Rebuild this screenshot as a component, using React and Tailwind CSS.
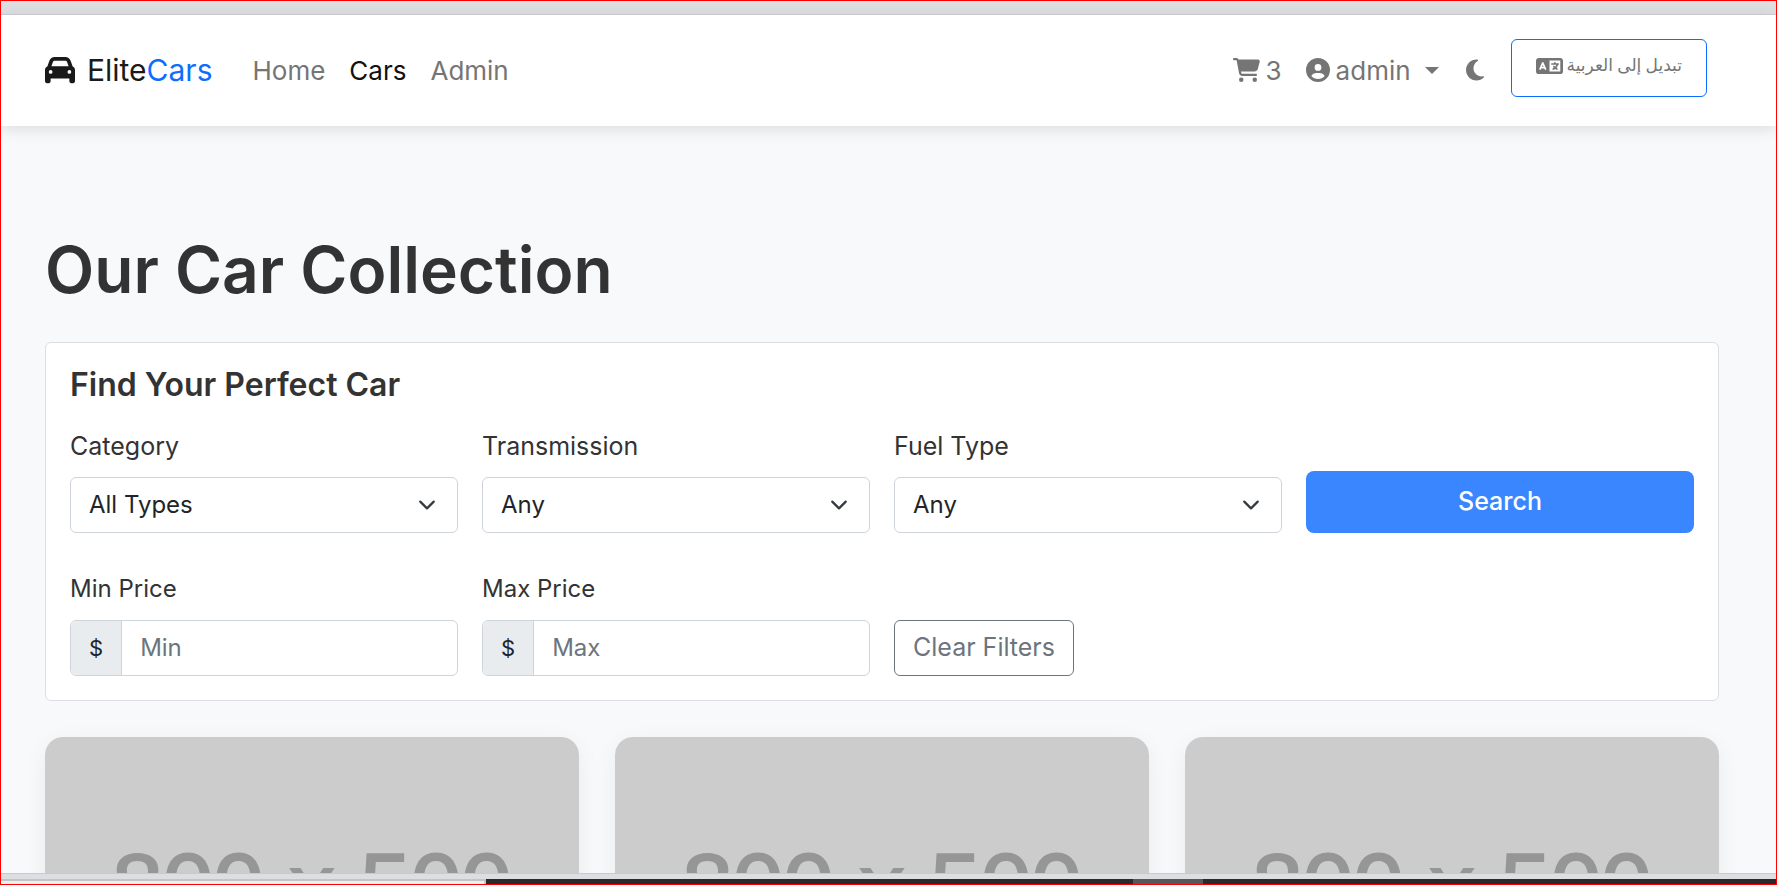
import { FaCar, FaCartShopping, FaCircleUser, FaMoon } from "react-icons/fa6";

function NavLink({ children, active }) {
  return (
    <a href="#" className={active ? "text-[#111111]" : "text-[#757575]"}>
      {children}
    </a>
  );
}

function LanguageIcon() {
  return (
    <svg viewBox="0 0 640 512" className="h-[22px] w-[27px]" fill="currentColor" aria-hidden="true">
      <path d="M0 128C0 92.7 28.7 64 64 64H576c35.3 0 64 28.7 64 64V384c0 35.3-28.7 64-64 64H64c-35.3 0-64-28.7-64-64V128zm320 0V384H576V128H320zM178.3 175.900c-3.200-7.200-10.400-11.900-18.300-11.900s-15.100 4.700-18.300 11.900l-64 144c-4.500 10.100 .1 21.900 10.200 26.400s21.900-.1 26.400-10.200l8.900-20.100h73.600l8.900 20.100c4.500 10.100 16.300 14.600 26.400 10.200s14.600-16.300 10.200-26.400l-64-144zM160 233.200L179 276H141l19-42.800zM448 164c11 0 20 9 20 20v4h44 16c11 0 20 9 20 20s-9 20-20 20h-2l-1.600 4.500c-8.900 24.400-22.400 46.600-39.600 65.400c.9 .6 1.800 1.100 2.700 1.600l18.900 11.300c9.500 5.700 12.500 18 6.900 27.400s-18 12.500-27.400 6.900l-18.900-11.300c-4.500-2.700-8.800-5.500-13.100-8.500c-10.600 7.500-21.900 14-34 19.400l-3.600 1.600c-10.100 4.500-21.900-.1-26.400-10.200s.1-21.900 10.200-26.400l3.600-1.600c6.400-2.900 12.600-6.100 18.500-9.800l-12.200-12.200c-7.800-7.800-7.800-20.500 0-28.300s20.500-7.800 28.300 0l14.600 14.600 .5 .5c12.400-13.100 22.500-28.300 29.800-45H448 376c-11 0-20-9-20-20s9-20 20-20h52v-4c0-11 9-20 20-20z" />
    </svg>
  );
}

function SelectField({ id, label, option }) {
  return (
    <div className="flex flex-col gap-[13px]">
      <label htmlFor={id} className="text-[25px] leading-9">{label}</label>
      <div className="relative">
        <select
          id={id}
          className="h-14 w-full appearance-none rounded-md border border-[#ced4da] bg-white px-[18px] text-[#212529]"
        >
          <option>{option}</option>
        </select>
        <svg
          viewBox="0 0 16 16"
          className="pointer-events-none absolute top-1/2 right-[22px] size-[18px] -translate-y-1/2"
          fill="none"
          stroke="#343a40"
          strokeWidth="2"
          strokeLinecap="round"
          strokeLinejoin="round"
          aria-hidden="true"
        >
          <path d="m2 5 6 6 6-6" />
        </svg>
      </div>
    </div>
  );
}

function PriceField({ id, label, placeholder }) {
  return (
    <div className="flex flex-col gap-[13px]">
      <label htmlFor={id} className="leading-9">{label}</label>
      <div className="flex h-14 overflow-hidden rounded-md border border-[#ced4da] bg-white">
        <span className="flex items-center border-r border-[#ced4da] bg-[#e9ecef] px-[18px] text-[22px] text-[#212529]">$</span>
        <input
          id={id}
          type="text"
          inputMode="numeric"
          placeholder={placeholder}
          className="w-full min-w-0 px-[18px] placeholder:text-[#6c757d]"
        />
      </div>
    </div>
  );
}

function CarCard() {
  return (
    <article className="overflow-hidden rounded-[18px] bg-white shadow-[0_6px_24px_rgba(0,0,0,0.06)]">
      <div className="flex h-[296px] items-center justify-center bg-[#cccccc] font-['Liberation_Sans',sans-serif] text-[91px] leading-none text-[#969696] [-webkit-text-stroke:2px_#969696]">
        800 x 500
      </div>
    </article>
  );
}

export default function App() {
  return (
    <div className="flex h-screen flex-col overflow-hidden border border-[#ff0000] bg-[#f8f9fb] font-['Inter',sans-serif] text-[24px] text-[#333333]">
      <div className="h-[14px] shrink-0 border-b border-[#cfd0d5] bg-[#dedfe3]" />
      <header className="z-10 flex shrink-0 items-center bg-white pt-6 pr-[69px] pb-[25px] pl-11 text-[26px] shadow-[0_3px_15px_rgba(0,0,0,0.12)]">
        <a href="#" className="flex items-center gap-3 text-[30px] text-[#1a1a1a]">
          <FaCar className="size-[30px]" />
          <span>
            Elite<span className="text-[#0d6efd]">Cars</span>
          </span>
        </a>
        <nav className="ml-10 flex gap-6">
          <NavLink>Home</NavLink>
          <NavLink active>Cars</NavLink>
          <NavLink>Admin</NavLink>
        </nav>
        <div className="ml-auto flex items-center gap-6 text-[#757575]">
          <a href="#" className="flex items-center gap-[6px]">
            <FaCartShopping className="h-6 w-[27px]" />3
          </a>
          <button type="button" className="flex items-center gap-[6px]">
            <FaCircleUser className="size-6" />
            admin
            <svg viewBox="0 0 14 7" className="ml-2 h-[7px] w-[14px]" fill="currentColor" aria-hidden="true">
              <path d="M0 0h14L7 7z" />
            </svg>
          </button>
          <button type="button" aria-label="Dark mode">
            <FaMoon className="size-6" />
          </button>
          <button
            type="button"
            className="mb-1 flex h-[58px] items-center gap-1 rounded-md border border-[#0d6efd] px-6 pb-1 font-['Liberation_Serif','DejaVu_Sans',serif] text-[17px]"
          >
            <LanguageIcon />
            <span lang="ar" dir="rtl">تبديل إلى العربية</span>
          </button>
        </div>
      </header>
      <main className="min-h-0 flex-1 overflow-hidden pt-[108px] pr-[57px] pl-11">
        <h1 className="text-[64px] leading-[72px] font-semibold">Our Car Collection</h1>
        <form className="mt-9 rounded-md border border-[#dcdee1] bg-white p-6">
          <h2 className="text-[32px] leading-9 font-semibold">Find Your Perfect Car</h2>
          <div className="mt-[25px] grid grid-cols-4 items-end gap-x-6 gap-y-[38px]">
            <SelectField id="category" label="Category" option="All Types" />
            <SelectField id="transmission" label="Transmission" option="Any" />
            <SelectField id="fuel" label="Fuel Type" option="Any" />
            <button type="submit" className="h-[62px] rounded-lg bg-[#3a86ff] text-[25px] font-medium text-white">
              Search
            </button>
            <PriceField id="min-price" label="Min Price" placeholder="Min" />
            <PriceField id="max-price" label="Max Price" placeholder="Max" />
            <button type="reset" className="h-14 justify-self-start rounded-md border border-[#6c757d] px-[18px] text-[25px] text-[#6c757d]">
              Clear Filters
            </button>
          </div>
        </form>
        <section className="mt-9 grid grid-cols-3 gap-9">
          <CarCard />
          <CarCard />
          <CarCard />
        </section>
      </main>
      <footer className="z-10 shrink-0">
        <div className="h-[6px] border-t border-[#c8cbcd] bg-[#dcdee1]" />
        <div className="flex h-[5px] bg-[#282b2b]">
          <div className="w-[27.3%] border-t-2 border-r-2 border-[#c2c5c5] bg-[#edefef]" />
          <div className="w-[36.5%]" />
          <div className="w-[3.9%] bg-[#555858]" />
        </div>
      </footer>
    </div>
  );
}
